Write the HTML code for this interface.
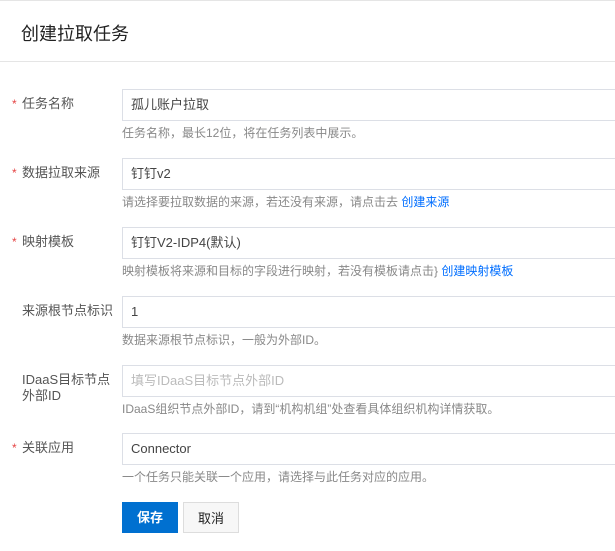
<!DOCTYPE html>
<html><head><meta charset="utf-8"><style>
body{margin:0;width:615px;height:551px;background:#fff;font-family:"Liberation Sans","Noto Sans CJK SC",sans-serif;overflow:hidden;position:relative}
.top{position:absolute;top:0;left:0;right:0;height:1px;background:#e5e5e5}
.title{position:absolute;left:21px;top:20px;font-size:18px;color:#222}
.div{position:absolute;top:61px;left:0;right:0;height:1px;background:#e5e5e5}
.lab{position:absolute;left:22px;font-size:13px;color:#555;line-height:16px}
.star{position:absolute;left:12px;color:#e54545;font-size:12px}
.inp{position:absolute;left:122px;width:500px;height:30px;border:1px solid #dcdfe6;box-sizing:content-box;font-size:13px;color:#444;line-height:30px;padding-left:8px}
.hint{position:absolute;left:122px;font-size:12px;color:#888}
.hint a{color:#006eff;text-decoration:none}
.btn{position:absolute;top:502px;height:31px;line-height:31px;text-align:center;font-size:13px;box-sizing:border-box}
</style></head><body>
<div class="top"></div>
<div class="title">创建拉取任务</div>
<div class="div"></div>

<span class="star" style="top:97px">*</span><div class="lab" style="top:96px">任务名称</div>
<div class="inp" style="top:89px">孤儿账户拉取</div>
<div class="hint" style="top:124px">任务名称，最长12位，将在任务列表中展示。</div>

<span class="star" style="top:166px">*</span><div class="lab" style="top:165px">数据拉取来源</div>
<div class="inp" style="top:158px">钉钉v2</div>
<div class="hint" style="top:193px">请选择要拉取数据的来源，若还没有来源，请点击去 <a>创建来源</a></div>

<span class="star" style="top:235px">*</span><div class="lab" style="top:234px">映射模板</div>
<div class="inp" style="top:227px">钉钉V2-IDP4(默认)</div>
<div class="hint" style="top:262px">映射模板将来源和目标的字段进行映射，若没有模板请点击} <a>创建映射模板</a></div>

<div class="lab" style="top:303px">来源根节点标识</div>
<div class="inp" style="top:296px">1</div>
<div class="hint" style="top:331px">数据来源根节点标识，一般为外部ID。</div>

<div class="lab" style="top:372px">IDaaS目标节点<br>外部ID</div>
<div class="inp" style="top:365px;color:#bbb">填写IDaaS目标节点外部ID</div>
<div class="hint" style="top:400px">IDaaS组织节点外部ID，请到“机构机组”处查看具体组织机构详情获取。</div>

<span class="star" style="top:441px">*</span><div class="lab" style="top:440px">关联应用</div>
<div class="inp" style="top:433px">Connector</div>
<div class="hint" style="top:468px">一个任务只能关联一个应用，请选择与此任务对应的应用。</div>

<div class="btn" style="left:122px;width:56px;background:#0070d0;color:#fff;font-weight:bold">保存</div>
<div class="btn" style="left:183px;width:56px;background:#f7f7f7;border:1px solid #ddd;color:#222">取消</div>
</body></html>
